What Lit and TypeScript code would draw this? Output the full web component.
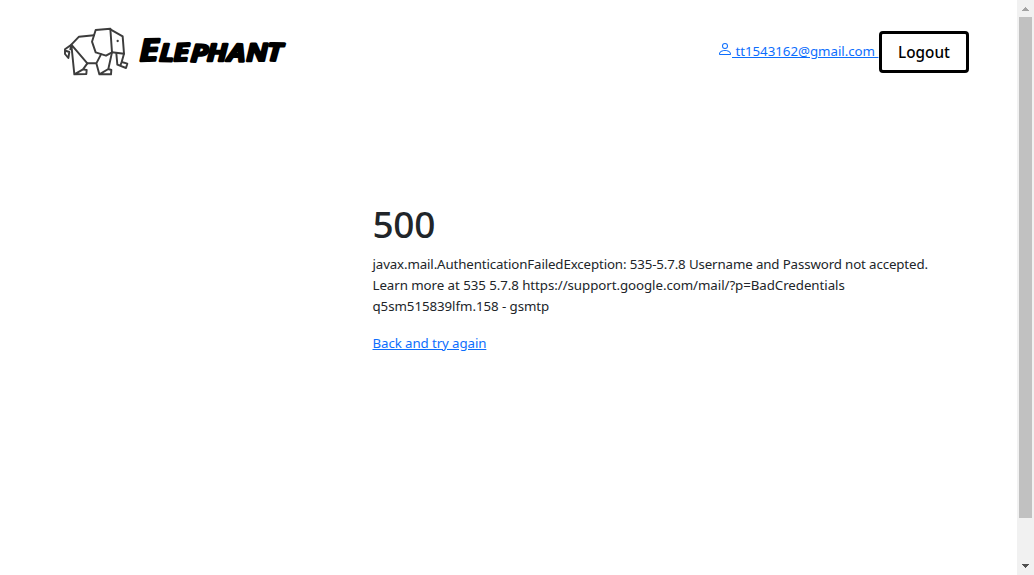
import { LitElement, html, css } from "lit";
import { customElement } from "lit/decorators.js";

@customElement("elephant-logo")
class ElephantLogo extends LitElement {
  static styles = css`
    :host { display: flex; height: 64px; }
    svg { display: block; }
    .lines { fill: none; stroke: #3c3c3c; stroke-width: 5.8; stroke-linejoin: round; stroke-linecap: round; }
    .eye { fill: #3c3c3c; }
    .word { font: italic 600 24px "Noto Sans", "Open Sans", sans-serif; fill: #000; stroke: #000; stroke-width: 2.6; stroke-linejoin: round; }
  `;
  render() {
    return html`
      <svg width="80" height="64" viewBox="0 0 240 192">
        <g class="lines">
          <path d="M117 46L72 50L49 74L30 88V102L40 114L43 96L34 93M49 74L46 88" />
          <path d="M122 30L166 26L171 97L153 107L122 97L111 65Z" />
          <path d="M166 28L203 49L207 101L171 97" />
          <path d="M184 100L187 134L213 144L217 131L200 126L207 101M200 126L196 137" />
          <path d="M49 74L97 130L84 148L95 150L94 162L58 163L49 74M58 163L84 148" />
          <path d="M97 130H124L138 103M124 130L133 163L168 163L169 150L160 147L171 97M133 163L160 147" />
        </g>
        <circle class="eye" cx="188" cy="63" r="3.5" />
      </svg>
      <svg width="165" height="64" viewBox="0 0 165 64">
        <text class="word" transform="scale(1.2 1)" x="4 20.3 32.3 46.3 60 77 93 110" y="41 41 41 41.5 41.5 41 41 40.5" rotate="-2 1 -2 2 0 2 -1 1"><tspan font-size="30">E</tspan>LEPHANT</text>
      </svg>
    `;
  }
}

@customElement("scroll-rail")
class ScrollRail extends LitElement {
  static styles = css`
    :host { display: flex; flex-direction: column; align-items: center; width: 17px; height: 100%; background: #f1f1f1; }
    .thumb { width: 13px; height: 501px; background: #c1c1c1; }
    svg { display: block; flex: none; }
    .down { margin-top: auto; }
  `;
  render() {
    return html`
      <svg width="17" height="17" shape-rendering="crispEdges"><path d="M8 7h1v1h1v1h1v1h1v1H5v-1h1V9h1V8h1z" fill="#a3a3a3" /></svg>
      <div class="thumb"></div>
      <svg class="down" width="17" height="17" shape-rendering="crispEdges"><path d="M5 6h7v1h-1v1h-1v1H9v1H8V9H7V8H6V7H5z" fill="#505050" /></svg>
    `;
  }
}

@customElement("app-root")
class AppRoot extends LitElement {
  static styles = css`
    :host { display: flex; height: 575px; background: #fff; color: #212529; font: 13.3px/21px "Noto Sans", "Open Sans", sans-serif; overflow: hidden; }
    .page { flex: 1; }
    header { display: flex; justify-content: space-between; align-items: flex-start; padding: 20px 48px 0 55px; }
    .account { display: flex; align-items: flex-start; padding-top: 11px; }
    a { color: #0d6efd; text-decoration: underline; }
    .user { display: flex; padding-top: 10px; }
    .user svg { margin: 0 -1px 0 0; }
    .mail { white-space: pre; width: 147px; letter-spacing: -0.03px; }
    button { box-sizing: border-box; width: 90px; height: 42px; padding: 0; border: 3px solid #000; border-radius: 4px; background: #fff; color: #000; font: 500 15.3px/24px "Noto Sans", "Open Sans", sans-serif; }
    main { padding: 117px 0 0 372.5px; }
    h1 { margin: 0 0 7px; font-size: 37px; line-height: 46px; font-weight: 500; letter-spacing: -0.3px; }
    p { margin: 0 0 16px; white-space: nowrap; letter-spacing: -0.13px; }
    .loose { letter-spacing: -0.06px; }
    .back { letter-spacing: -0.1px; }
  `;
  render() {
    return html`
      <div class="page">
        <header>
          <elephant-logo></elephant-logo>
          <div class="account">
            <a class="user" href="#">
              <svg width="16" height="16" viewBox="0 0 16 16" fill="#0d6efd"><path d="M8 8a3 3 0 1 0 0-6 3 3 0 0 0 0 6zm2-3a2 2 0 1 1-4 0 2 2 0 0 1 4 0zm4 8c0 1-1 1-1 1H3s-1 0-1-1 1-4 6-4 6 3 6 4zm-1-.004c-.001-.246-.154-.986-.832-1.664C11.516 10.68 10.289 10 8 10c-2.29 0-3.516.68-4.168 1.332-.678.678-.83 1.418-.832 1.664h10z" /></svg>
              <span class="mail"> tt1543162@gmail.com </span>
            </a>
            <button>Logout</button>
          </div>
        </header>
        <main>
          <h1>500</h1>
          <p>javax.mail.AuthenticationFailedException: 535-5.7.8 Username and Password not accepted.<br /><span class="loose">Learn more at 535 5.7.8 https://support.google.com/mail/?p=BadCredentials<br />q5sm515839lfm.158 - gsmtp</span></p>
          <a class="back" href="#">Back and try again</a>
        </main>
      </div>
      <scroll-rail></scroll-rail>
    `;
  }
}
